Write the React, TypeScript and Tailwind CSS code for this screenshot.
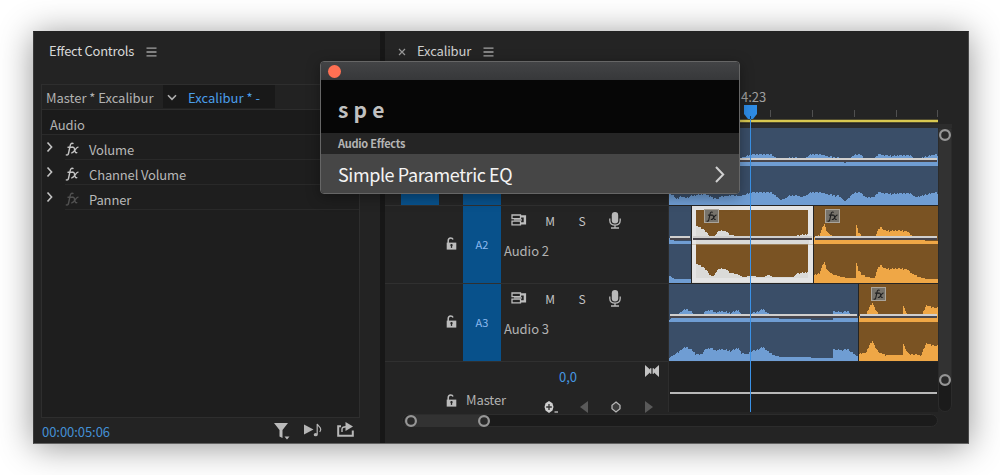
import React from "react";

type Point = [number, number];

/* Builds a stepped wave outline, one column per pixel, from sparse height samples. */
function wavePath(points: Point[], width: number, base: number): string {
  let d = `M0 ${base}`;
  for (let x = 0; x < width; x++) {
    let i = 0;
    while (i < points.length - 2 && points[i + 1][0] <= x) i++;
    const [x0, h0] = points[i];
    const [x1, h1] = points[Math.min(i + 1, points.length - 1)];
    const t = x1 > x0 ? Math.min(1, Math.max(0, (x - x0) / (x1 - x0))) : 0;
    const noise = ((x * 37 + 11) % 7) / 7 - 0.5;
    const raw = h0 + (h1 - h0) * t;
    const h = raw > 5 ? raw + noise * 1.5 : raw;
    d += `V${(base - h).toFixed(1)}H${x + 1}`;
  }
  return d + `V${base}Z`;
}

const A1: Point[] = [[0, 11], [4, 9], [7, 5], [9, 6], [11, 8], [15, 7], [17, 6], [21, 8], [27, 9], [34, 10], [41, 8], [44, 6], [49, 5], [51, 8], [57, 8], [62, 9], [71, 8], [77, 10], [81, 12], [91, 12], [101, 12], [104, 10], [107, 8], [111, 4], [116, 6], [119, 8], [126, 9], [132, 7], [137, 9], [142, 12], [149, 12], [154, 11], [159, 10], [163, 9], [166, 8], [168, 9], [171, 7], [175, 3], [176, 3], [179, 6], [184, 11], [191, 12], [196, 7], [204, 7], [209, 12], [215, 11], [223, 10], [231, 11], [241, 11], [246, 7], [251, 8], [259, 10], [266, 12], [270, 10]];
const A2A: Point[] = [[0, 6], [4, 4], [6, 3], [22, 3]];
const A2B: Point[] = [[0, 14], [3, 13], [7, 11], [10, 8], [13, 3], [17, 2], [20, 6], [22, 9], [26, 10], [31, 8], [34, 5], [41, 4], [46, 1], [54, 2], [67, 1], [72, 3], [77, 1], [97, 1], [101, 5], [112, 6]];
const A2C: Point[] = [[0, 7], [5, 9], [8, 17], [10, 20], [12, 14], [15, 10], [18, 8], [24, 6], [28, 5], [33, 4], [41, 4], [42, 19], [44, 12], [47, 8], [52, 5], [60, 4], [63, 13], [66, 17], [70, 14], [77, 13], [84, 14], [90, 13], [94, 12], [98, 8], [105, 5], [113, 3], [125, 3]];
const A3A: Point[] = [[0, 2], [5, 6], [9, 8], [12, 11], [17, 13], [22, 11], [26, 6], [32, 6], [36, 11], [41, 12], [46, 10], [54, 11], [61, 9], [69, 12], [72, 7], [78, 6], [81, 9], [87, 10], [94, 13], [98, 9], [104, 5], [111, 3], [131, 3], [154, 2], [163, 2], [164, 11], [171, 10], [178, 11], [182, 8], [186, 5], [190, 3]];
const A3B: Point[] = [[0, 6], [7, 8], [10, 15], [13, 19], [16, 13], [20, 7], [27, 5], [43, 5], [44, 17], [46, 11], [50, 6], [62, 5], [65, 13], [67, 17], [72, 15], [79, 14]];

function FxMark({ className }: { className: string }) {
  return (
    <svg viewBox="0 0 14 14" fill="none" stroke="currentColor" strokeWidth="1.4" strokeLinecap="round" className={className}>
      <path d="M8 1.5C6.3.7 5.5 2 5.2 3.6L3.6 11c-.3 1.6-1 2.3-2.3 1.9M3 5.2h4.2" />
      <path d="M7.4 5.3c1.6-.4 1.8.6 2.2 2.4.5 2.2.8 3.4 2.2 3M13 5.1c-2.1.2-3.6 5.7-6.3 5.8" />
    </svg>
  );
}

function FxBadge() {
  return (
    <span className="flex h-[14px] w-[15px] items-center justify-center border border-[#aaa49a] bg-[#77736b]">
      <FxMark className="h-[11px] w-[11px] text-[#202020]" />
    </span>
  );
}

interface ClipProps {
  wave: Point[];
  width: number;
  kind: "blue" | "orange" | "selected";
  className: string;
  badge?: string;
}

function Clip({ wave, width, kind, className, badge }: ClipProps) {
  const back = kind === "blue" ? "#3a4e68" : "#7a5323";
  const fill = kind === "blue" ? "#6f9dd3" : kind === "orange" ? "#efa746" : "#dadad8";
  const selected = kind === "selected";
  const inset = selected ? 4 : 0;
  const waveWidth = selected ? width - 9 : width;
  return (
    <div className={`relative h-[77px] shrink-0 overflow-hidden ${className}`}>
      <svg width={width} height="77" viewBox={`0 0 ${width} 77`} className="block" shapeRendering="crispEdges">
        <rect width={width} height="77" fill={selected ? "#e4e4e4" : back} />
        {selected && <rect x="4" y="4" width={width - 9} height="68" fill={back} />}
        <g transform={`translate(${inset} 0)`}>
          <path d={wavePath(wave, waveWidth, selected ? 34 : 38)} fill={fill} />
          <path d={wavePath(wave, waveWidth, selected ? 72 : 76)} fill={fill} />
        </g>
        {selected && <rect x="4" y="34" width={width - 8} height="4" fill={fill} />}
        <rect x="1" y="30" width={width - 2} height="2" fill="#d0cfce" />
        <rect x="1" y="32" width={width - 2} height="2" fill="#49464c" />
        <rect x="0" y="38" width={width} height="1" fill={selected ? "#b8aa90" : back} opacity="0.5" />
        <rect x="0" y="76" width={width} height="1" fill={fill} />
      </svg>
      {badge && (
        <div className={`absolute top-[3px] ${badge}`}>
          <FxBadge />
        </div>
      )}
    </div>
  );
}

function MenuIcon() {
  return (
    <svg width="11" height="10" viewBox="0 0 11 10" stroke="#a2a2a2" strokeWidth="1.3" className="mt-[3px]">
      <path d="M.5 1.2h10M.5 5h10M.5 8.8h10" />
    </svg>
  );
}

function LockIcon() {
  return (
    <svg width="11" height="13" viewBox="0 0 11 13" className="shrink-0">
      <path d="M2.2 6.5V3.8C2.2 1.9 3.2 1 4.7 1c1.2 0 2 .5 2.3 1.5" fill="none" stroke="#bcbcbc" strokeWidth="1.5" />
      <path d="M.7 5.6h9.6v7H.7z" fill="#bcbcbc" />
      <path d="M5.5 7.3v3.6" stroke="#252525" strokeWidth="1.3" />
      <circle cx="5.5" cy="8.2" r="1.1" fill="#252525" />
    </svg>
  );
}

function SyncIcon() {
  return (
    <svg width="16" height="12" viewBox="0 0 16 12" fill="none" stroke="#bdbdbd">
      <path d="M1 1h8.5v3.6H1zM1 7.2h8.5v3.6H1z" strokeWidth="1.3" />
      <path d="M10 2.4h3.9v7H10" strokeWidth="2.4" />
      <path d="M3 5.9h8" strokeWidth="1.2" />
    </svg>
  );
}

function MicIcon() {
  return (
    <svg width="12" height="17" viewBox="0 0 12 17" fill="none" stroke="#b9b9b9">
      <rect x="2.8" y="0" width="6.4" height="11.4" rx="3.2" fill="#b9b9b9" stroke="none" />
      <path d="M.8 6.5v2c0 3 2 4.7 5.2 4.7s5.2-1.7 5.2-4.7v-2M6 13v2.5M2 16h8" strokeWidth="1.3" />
    </svg>
  );
}

function Ring() {
  return (
    <svg width="12" height="12" viewBox="0 0 12 12" className="block shrink-0">
      <circle cx="6" cy="6" r="4.9" fill="#292929" stroke="#969696" strokeWidth="2.2" />
    </svg>
  );
}

function TrackHeader({ id, name }: { id: string; name: string }) {
  return (
    <div className="flex h-[78px] border-b border-[#303030]">
      <div className="flex w-[78px] justify-end pt-[31px] pr-[6px]">
        <LockIcon />
      </div>
      <div className="flex w-[38px] items-center justify-center bg-[#08518b] text-[11px] text-[#8cb9ef]">{id}</div>
      <div className="flex-1 pt-[6px] pl-[3px]">
        <div className="flex h-[17px] items-center">
          <div className="mt-[-2px] flex w-[33px] pl-[7px]"><SyncIcon /></div>
          <div className="w-[26px] text-center text-[12px] leading-[16px] text-[#c4c4c4]">M</div>
          <div className="ml-[6px] w-[26px] text-center text-[12px] leading-[16px] text-[#c4c4c4]">S</div>
          <div className="ml-[14px]"><MicIcon /></div>
        </div>
        <div className="mt-[12px] text-[13px] leading-[20px] tracking-[-0.05px] text-[#b2b2b2]">{name}</div>
      </div>
    </div>
  );
}

function EffectRow({ name, dim }: { name: string; dim?: boolean }) {
  return (
    <div className="flex h-[25px]">
      <svg width="8" height="12" viewBox="0 0 8 12" className="mt-[6px] ml-[4px]" fill="none" stroke="#c4c4c4" strokeWidth="1.6">
        <path d="M1.5 1.5 5.6 6 1.5 10.5" />
      </svg>
      <div className="ml-[11px] flex flex-1 border-b border-[#292929]">
        <FxMark className={dim ? "mt-[7px] h-[14px] w-[14px] text-[#515151]" : "mt-[7px] h-[14px] w-[14px] text-[#c4c4c4]"} />
        <span className="ml-[10px] pt-[5px] text-[13px] leading-[20px] tracking-[-0.15px] text-[#b8b8b8]">{name}</span>
      </div>
    </div>
  );
}

function EffectControls() {
  return (
    <section className="flex w-[346px] shrink-0 flex-col bg-[#232323] pl-[7px]">
      <header className="flex h-[52px] items-center gap-[12px] pb-[15px] pl-[8px] text-[13px] text-[#d8d8d8]">
        <span className="w-[85px] tracking-[-0.27px] whitespace-nowrap">Effect Controls</span>
        <MenuIcon />
      </header>
      <div className="flex h-[335px] w-[319px] flex-col border border-[#2e2e2e] bg-[#1e1e1e]">
        <div className="flex h-[25px] items-center border-b border-[#2d2d2d] bg-[#222222] text-[13px] leading-[20px]">
          <span className="w-[121px] pt-[2px] pl-[4px] tracking-[-0.03px] whitespace-nowrap text-[#b2b2b2]">Master * Excalibur</span>
          <div className="flex h-[23px] w-[112px] items-center bg-[#191919]">
            <svg width="10" height="7" viewBox="0 0 10 7" className="mt-[2px] ml-[4px]" fill="none" stroke="#b0b0b0" strokeWidth="1.6">
              <path d="m1 1.3 4 4 4-4" />
            </svg>
            <span className="ml-[11px] pt-[2px] whitespace-nowrap text-[#4b9ee9]">Excalibur * -</span>
          </div>
        </div>
        <div className="h-[25px] border-b border-[#2a2a2a] bg-[#1b1b1b] pt-[5px] pl-[8px] text-[13px] leading-[20px] tracking-[-0.1px] text-[#b2b2b2]">Audio</div>
        <EffectRow name="Volume" />
        <EffectRow name="Channel Volume" />
        <EffectRow name="Panner" dim />
      </div>
      <footer className="flex h-[25px] items-center">
        <span className="w-[232px] pt-[2px] pl-px text-[13px] leading-[18px] tracking-[-0.05px] text-[#4390d5]">00:00:05:06</span>
        <svg width="18" height="18" viewBox="0 0 18 18" fill="#bababa">
          <path d="M1 1h14L9.5 8v8l-3-1.5V8zM11.5 14.5h5L14 17.5z" />
        </svg>
        <svg width="18" height="14" viewBox="0 0 18 14" fill="#b5b5b5" className="mt-[-2px] ml-[13px]">
          <path d="M0 1.5 9.5 6.5 0 11.5z" />
          <ellipse cx="11.7" cy="11.7" rx="2" ry="1.6" />
          <path d="M13.2 11.5V1c.5 2 3.5 2.6 3.5 5.2 0 1-.4 1.9-1 2.6" fill="none" stroke="#b5b5b5" strokeWidth="1.2" />
        </svg>
        <svg width="18" height="15" viewBox="0 0 18 15" className="mt-[-2px] ml-[15px]">
          <path d="M4 4.2H1.2v9.6h14.6V8.5" fill="none" stroke="#b8b8b8" strokeWidth="2" />
          <path d="M8.5 0 16 4.5 8.5 9z" fill="#b8b8b8" />
          <path d="M5 10V7.3C5 5.4 6 4.8 9 4.8" fill="none" stroke="#b8b8b8" strokeWidth="1.4" />
        </svg>
      </footer>
    </section>
  );
}

function Ruler() {
  return (
    <div className="relative h-[37px]">
      <div className="pl-[72px] text-[13px] leading-[20px] text-[#a0a0a0]">4:23</div>
      <svg width="270" height="37" viewBox="0 0 270 37" className="absolute top-0 left-0">
        <path d="M101.5 23v7M143.5 23v7M185.5 23v7M227.5 23v7M268.5 23v7" stroke="#505050" />
        <path d="M0 34h269" stroke="#d9c850" strokeWidth="2.5" />
        <path d="M75 18h13v9l-4 5h-5l-4-5z" fill="#2e8ce6" />
        <path d="M81.5 29v8" stroke="#123d67" />
      </svg>
    </div>
  );
}

function Headers() {
  return (
    <div className="w-[283px] shrink-0">
      <div className="h-[119px] border-b border-[#303030] pl-[16px]">
        <div className="flex h-full items-end">
          <div className="h-[75px] w-[38px] bg-[#08518b]" />
          <div className="ml-[24px] h-[75px] w-[38px] bg-[#08518b]" />
        </div>
      </div>
      <TrackHeader id="A2" name="Audio 2" />
      <TrackHeader id="A3" name="Audio 3" />
      <div className="flex h-[50px]">
        <div className="flex w-[146px] items-center gap-[9px] pt-[26px] pl-[61px]">
          <LockIcon />
          <span className="text-[13px] leading-[20px] tracking-[-0.1px] text-[#b2b2b2]">Master</span>
        </div>
        <div className="flex-1">
          <div className="flex h-[25px] items-center">
            <span className="w-[76px] pt-[4px] pl-[28px] text-[13px] leading-[20px] text-[#4697e0]">0,0</span>
            <svg width="14" height="12" viewBox="0 0 14 12" className="mt-[-7px] ml-[38px]" fill="#c4c4c4">
              <path d="M0 0 5 4.6V3.2h1.4v5.6H5V7.4L0 12zM14 0 9 4.6V3.2H7.6v5.6H9V7.4l5 4.6z" />
            </svg>
          </div>
          <div className="flex h-[25px] items-center pt-[15px] pl-[13px]">
            <svg width="14" height="12" viewBox="0 0 14 12" className="shrink-0">
              <path d="M5 0 8.5 2.2 9.5 6 8.5 9.5 5 12 1.5 9.5.5 6 1.5 2.2z" fill="#cfcfcf" />
              <path d="M5 3v6M2.2 6h5.6" stroke="#303030" strokeWidth="1.3" />
              <path d="M10.5 11h3.5" stroke="#bbbbbb" strokeWidth="1.4" />
            </svg>
            <svg width="8" height="12" viewBox="0 0 8 12" className="ml-[22px]" fill="#595959"><path d="M8 0v12L0 6z" /></svg>
            <svg width="10" height="12" viewBox="0 0 10 12" className="ml-[23px]">
              <path d="M5 1 9 4.2v3.6L5 11 1 7.8V4.2z" fill="#3c3c3c" stroke="#b5b5b5" strokeWidth="1.3" />
            </svg>
            <svg width="8" height="12" viewBox="0 0 8 12" className="ml-[24px]" fill="#595959"><path d="M0 0v12l8-6z" /></svg>
          </div>
        </div>
      </div>
    </div>
  );
}

function Timeline() {
  return (
    <section className="flex flex-1 flex-col bg-[#242424]">
      <header className="flex h-[55px] items-center pb-[18px] pl-[13px] text-[13px] text-[#d0d0d0]">
        <svg width="8" height="8" viewBox="0 0 8 8" stroke="#999999" strokeWidth="1.2" className="mt-[2px]"><path d="m1 1 6 6M7 1 1 7" /></svg>
        <span className="ml-[11px] w-[66px] tracking-[-0.15px]">Excalibur</span>
        <MenuIcon />
      </header>
      <div className="flex h-[325px]">
        <Headers />
        <div className="relative w-[270px] shrink-0 border-l border-[#2d2d2d]">
          <Ruler />
          <div className="h-[4px] bg-[#2c2c2c]" />
          <div className="h-[78px]"><Clip wave={A1} width={269} kind="blue" className="w-[269px]" /></div>
          <div className="flex h-[78px]">
            <Clip wave={A2A} width={22} kind="blue" className="w-[22px]" />
            <Clip wave={A2B} width={121} kind="selected" className="ml-[1px] w-[121px]" badge="left-[12px]" />
            <Clip wave={A2C} width={124} kind="orange" className="ml-[1px] w-[124px]" badge="left-[11px]" />
          </div>
          <div className="flex h-[78px]">
            <Clip wave={A3A} width={189} kind="blue" className="w-[189px]" />
            <Clip wave={A3B} width={79} kind="orange" className="ml-[1px] w-[79px]" badge="left-[12px]" />
          </div>
          <div className="h-[50px] bg-[#1f1f1f] pt-[30px] pr-px pl-px"><div className="h-[2px] bg-[#b8b8b8]" /></div>
          <div className="absolute top-[32px] bottom-0 left-[81px] w-px bg-[#3a91e6]" />
        </div>
        <div className="flex w-[14px] flex-col pt-[37px]">
          <div className="h-[4px] bg-[#2c2c2c]" />
          <div className="flex flex-1 flex-col rounded-b-full border border-[#2b2b2b] bg-[#1b1b1b]">
            <div className="flex h-[257px] flex-col items-center justify-between rounded-b-full bg-[#323232]"><Ring /><Ring /></div>
          </div>
        </div>
      </div>
      <div className="mt-[2px] ml-[17px] flex h-[13px] w-[536px] items-center rounded-full border border-[#2c2c2c] bg-[#1b1b1b]">
        <div className="ml-px flex h-[12px] w-[86px] items-center justify-between rounded-full bg-[#323232] pl-px"><Ring /><Ring /></div>
      </div>
    </section>
  );
}

function CommandDialog() {
  return (
    <div className="absolute top-[61px] left-[320px] flex h-[133px] w-[420px] flex-col overflow-hidden rounded-[4px] border border-[#666666] bg-[#222222] shadow-[0_3px_14px_rgba(0,0,0,0.35)]">
      <div className="flex h-[18px] items-center bg-linear-to-b from-[#434446] to-[#37383a] pl-[7px]">
        <span className="size-[13px] rounded-full bg-[#ff7053]" />
      </div>
      <div className="flex h-[53px] items-center bg-[#060606] pt-[6px] pl-[17px] text-[21px] font-bold tracking-[0.2px] text-[#c0c0c0]">s p e</div>
      <div className="flex h-[21px] items-center bg-[#252525] pl-[17px] text-[11px] font-bold tracking-[-0.27px] text-[#b4b4b4]">Audio Effects</div>
      <div className="flex flex-1 items-center justify-between bg-[#464646] pt-px pr-[14px] pl-[17px] text-[18px] tracking-[-0.4px] text-[#f4f4f4]">
        <span>Simple Parametric EQ</span>
        <svg width="10" height="17" viewBox="0 0 10 17" fill="none" stroke="#d0d0d0" strokeWidth="2"><path d="m1 1 7.2 7.5L1 16" /></svg>
      </div>
    </div>
  );
}

export default function App() {
  return (
    <main className="relative h-[475px] w-[1000px] overflow-hidden bg-white pt-[31px] pl-[33px] font-['Noto_Sans_CJK_SC','Noto_Sans',sans-serif]">
      <div className="flex h-[413px] w-[936px] overflow-hidden border border-t-[#222222] border-r-[#484848] border-b-[#626262] border-l-[#3b3b3b] bg-[#171717] shadow-[0_3px_32px_rgba(0,0,0,0.42)]">
        <EffectControls />
        <div className="w-[5px] shrink-0 bg-[#171717]" />
        <Timeline />
      </div>
      <CommandDialog />
    </main>
  );
}
